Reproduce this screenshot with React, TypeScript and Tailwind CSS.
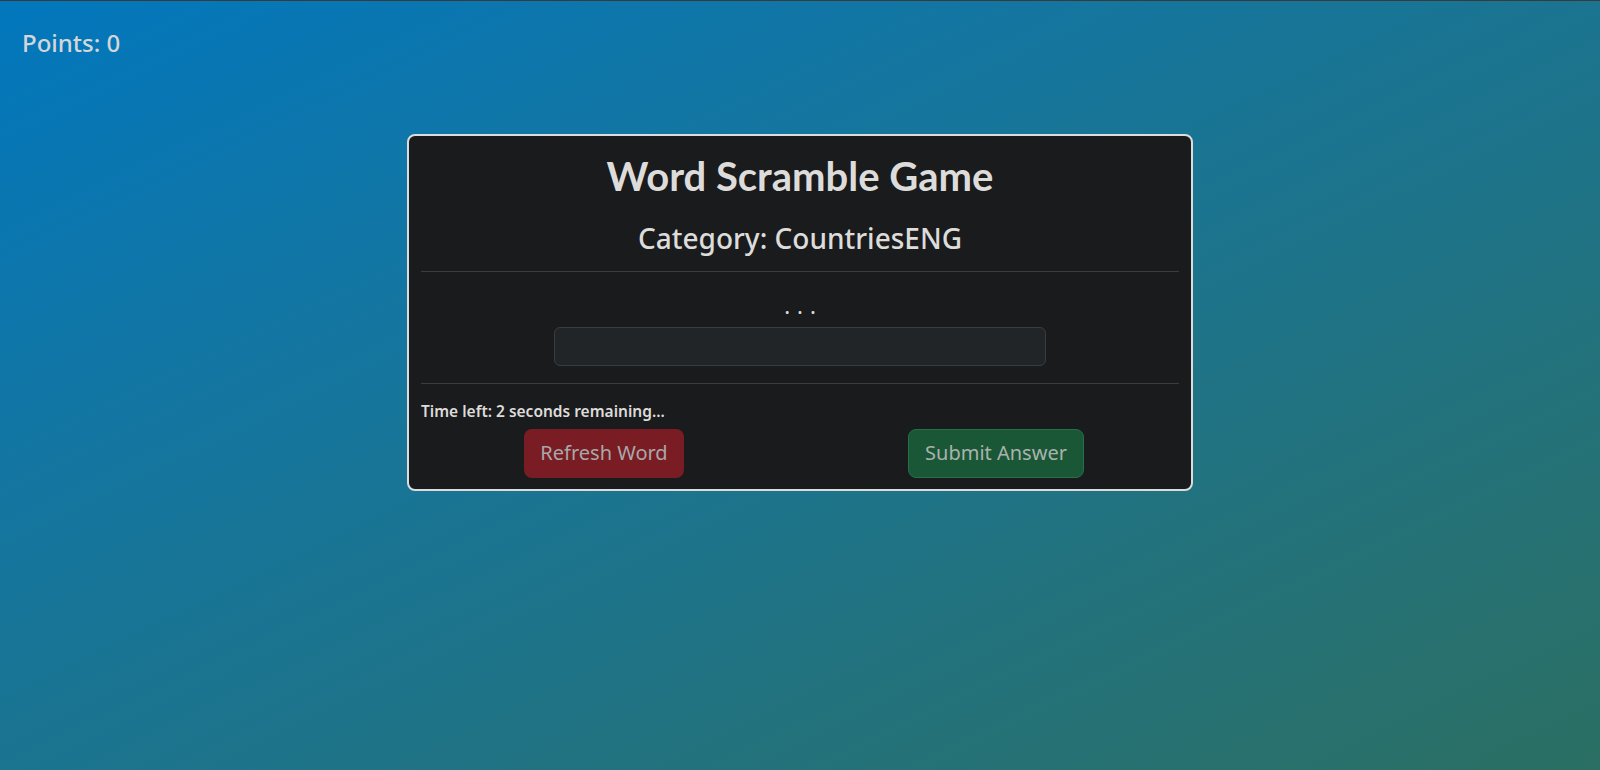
import React from 'react';

const App: React.FC = () => {
  return (
    <div className="min-h-screen w-full border-t border-[#3a3a3a] bg-gradient-to-br from-[#0277bd] to-[#2b6f63] font-['Noto_Sans',sans-serif] text-[#dddcda]">
      <div className="px-[22px] pt-[28px]">
        <h4 className="text-[24px] font-medium leading-[1.2] text-[#d4d6d8]">Points: 0</h4>
      </div>

      <div className="mx-auto mt-[76px] w-[786px] rounded-[8px] border-2 border-[#dcdcdc] bg-[#1a1b1d] px-3 pt-4 pb-[11px]">
        <h1 className="text-center font-['Lato',sans-serif] text-[40px] font-bold leading-[1.2]">Word Scramble Game</h1>
        <h3 className="mt-[22px] text-center text-[28px] font-medium leading-[1.2]">Category: CountriesENG</h3>
        <hr className="mt-[16px] border-t border-[#3b3c3e]" />

        <div className="flex flex-col items-center pt-[22px] pb-[17px]">
          <div className="pl-[7px] text-[22px] leading-none tracking-[7px]">...</div>
          <input
            type="text"
            className="mt-[11px] h-[39px] w-[492px] rounded-[6px] border border-[#3a3d40] bg-[#222527] px-3 text-[16px] text-[#dee2e6] outline-none"
          />
        </div>
        <hr className="border-t border-[#3b3c3e]" />

        <p className="mt-[18px] text-[15.5px] font-semibold leading-[1.2]">Time left: 2 seconds remaining...</p>

        <div className="-mx-[13px] mt-[8px] grid grid-cols-2">
          <div className="flex justify-center">
            <button className="h-[49px] rounded-[8px] bg-[#7a1c24] px-4 text-[20px] text-[#a8a8a8]">Refresh Word</button>
          </div>
          <div className="flex justify-center">
            <button className="h-[49px] rounded-[8px] border border-[#23704a] bg-[#1a5737] px-4 text-[20px] text-[#a9b3ad]">Submit Answer</button>
          </div>
        </div>
      </div>
    </div>
  );
};

export default App;
